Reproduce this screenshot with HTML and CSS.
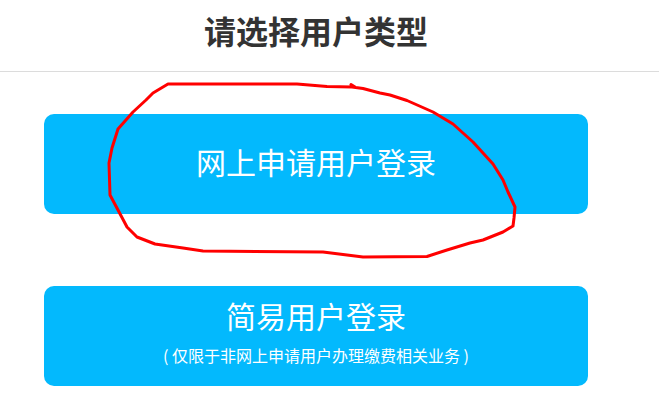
FILE: index.html
```html
<!DOCTYPE html>
<html lang="zh-CN">
<head>
<meta charset="utf-8">
<title>请选择用户类型</title>
<link rel="stylesheet" href="styles.css">
</head>
<body>
<header class="top">
  <h1 class="title">请选择用户类型</h1>
</header>
<main class="choices">
  <a class="choice choice-main" href="#">网上申请用户登录</a>
  <a class="choice choice-simple" href="#">
    <span class="choice-name">简易用户登录</span>
    <span class="choice-note">( 仅限于非网上申请用户办理缴费相关业务 )</span>
  </a>
</main>
<svg class="mark" width="659" height="418" viewBox="0 0 659 418" aria-hidden="true">
  <path d="M168 84 L297 84 L327 86.5 L352 87 L363 88.5 L380 93 L390 95 L407 100.5 L433 112 L453 124 L473 142 L493 164 L503 180 L508 192 L515 207 L514 218 L513 226 L503 232 L483 240 L470 243 L447 250 L427 256.5 L363 257 L323 252 L203 251 L183 248 L155 244 L137 237 L127 227 L118 210 L110 195 L109 163 L112 148 L118 129 L133 112 L146 100 L153 93 L168 84 Z M351 84.5 L355 87" fill="none" stroke="#ff0000" stroke-width="3" stroke-linejoin="round" stroke-linecap="round"/>
</svg>
</body>
</html>
```
FILE: styles.css
```css
html, body {
  margin: 0;
  padding: 0;
  background: #ffffff;
}

body {
  font-family: "Noto Sans CJK SC", "Microsoft YaHei", "Noto Sans", sans-serif;
  width: 659px;
  height: 418px;
  overflow: hidden;
  position: relative;
}

.top {
  height: 71px;
  border-bottom: 1px solid #dcdcdc;
}

.title {
  width: 632px;
  margin: 0;
  padding: 0 0 10px 0;
  font-size: 32px;
  font-weight: 700;
  line-height: 61px;
  text-align: center;
  color: #333333;
}

.choices {
  width: 544px;
  margin-left: 44px;
  padding-top: 42px;
  display: flex;
  flex-direction: column;
  gap: 72px;
}

.choice {
  display: flex;
  flex-direction: column;
  align-items: center;
  box-sizing: border-box;
  height: 100px;
  border-radius: 10px;
  background: #03b9fd;
  color: #ffffff;
  text-decoration: none;
}

.choice-main {
  justify-content: center;
  padding-bottom: 6px;
  font-size: 30px;
  line-height: 40px;
}

.choice-simple {
  padding-top: 9px;
}

.choice-name {
  font-size: 30px;
  line-height: 40px;
}

.choice-note {
  margin-top: 10px;
  font-size: 16px;
  line-height: 20px;
}

.mark {
  position: absolute;
  left: 0;
  top: 0;
  pointer-events: none;
}
```
